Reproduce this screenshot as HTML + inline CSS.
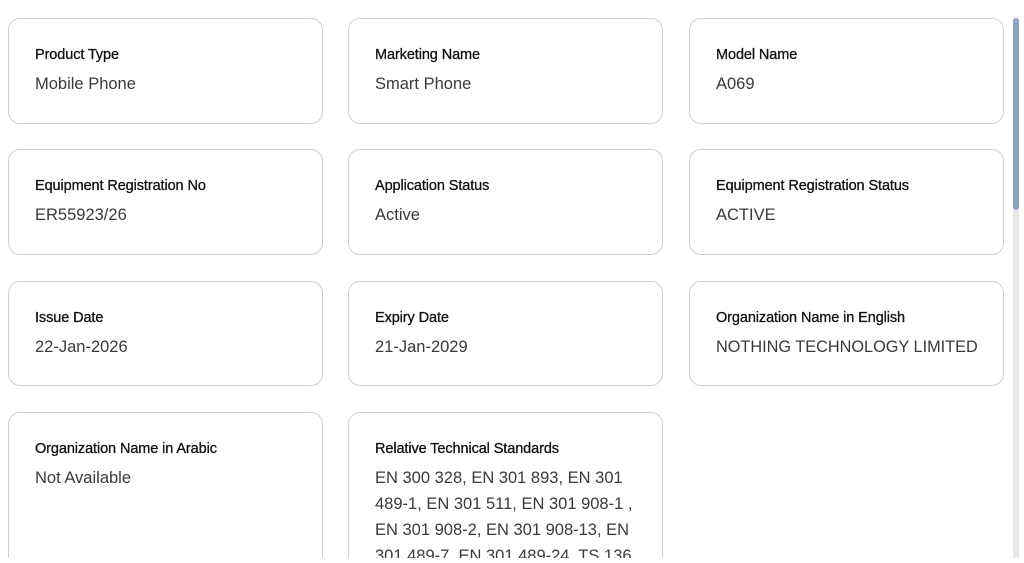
<!DOCTYPE html>
<html style="overflow:hidden;height:563px"><head><style>
body{margin:0;width:1024px;height:563px;background:#fff;overflow:hidden;position:relative;font-family:"Liberation Sans",Arial,sans-serif;}
.c{position:absolute;width:315px;border:1px solid #cfcfcf;border-radius:12px;box-sizing:border-box;background:#fff;}
.l{position:absolute;left:26px;top:28px;font-size:14.5px;color:#111;font-weight:normal;-webkit-text-stroke:0.3px #111;letter-spacing:-0.1px}
.v{position:absolute;left:26px;top:52px;font-size:16.5px;color:#3a3a3a;line-height:26px;width:270px}
.sb{position:absolute;left:1013px;top:18px;width:6px;height:192px;background:#8ea2bc;border-radius:3px}
.tr{position:absolute;left:1013px;top:210px;width:6px;height:348px;background:#e8e8e8}
.clip{position:absolute;left:0;top:558px;width:1024px;height:5px;background:#fff}
</style></head><body>
<div class="c" style="left:8px;top:18px;height:106px"><div class="l">Product Type</div><div class="v">Mobile Phone</div></div>
<div class="c" style="left:348px;top:18px;height:106px"><div class="l">Marketing Name</div><div class="v">Smart Phone</div></div>
<div class="c" style="left:689px;top:18px;height:106px"><div class="l">Model Name</div><div class="v">A069</div></div>
<div class="c" style="left:8px;top:149px;height:106px"><div class="l">Equipment Registration No</div><div class="v">ER55923/26</div></div>
<div class="c" style="left:348px;top:149px;height:106px"><div class="l">Application Status</div><div class="v">Active</div></div>
<div class="c" style="left:689px;top:149px;height:106px"><div class="l">Equipment Registration Status</div><div class="v">ACTIVE</div></div>
<div class="c" style="left:8px;top:281px;height:105px"><div class="l">Issue Date</div><div class="v">22-Jan-2026</div></div>
<div class="c" style="left:348px;top:281px;height:105px"><div class="l">Expiry Date</div><div class="v">21-Jan-2029</div></div>
<div class="c" style="left:689px;top:281px;height:105px"><div class="l">Organization Name in English</div><div class="v" style="width:290px;font-size:16.3px">NOTHING TECHNOLOGY LIMITED</div></div>
<div class="c" style="left:8px;top:412px;height:160px"><div class="l">Organization Name in Arabic</div><div class="v">Not Available</div></div>
<div class="c" style="left:348px;top:412px;height:160px;overflow:hidden"><div class="l">Relative Technical Standards</div><div class="v">EN 300 328, EN 301 893, EN 301<br>489-1, EN 301 511, EN 301 908-1 ,<br>EN 301 908-2, EN 301 908-13, EN<br>301 489-7, EN 301 489-24, TS 136</div></div>
<div class="clip"></div>
<div class="sb"></div><div class="tr"></div>
</body></html>
